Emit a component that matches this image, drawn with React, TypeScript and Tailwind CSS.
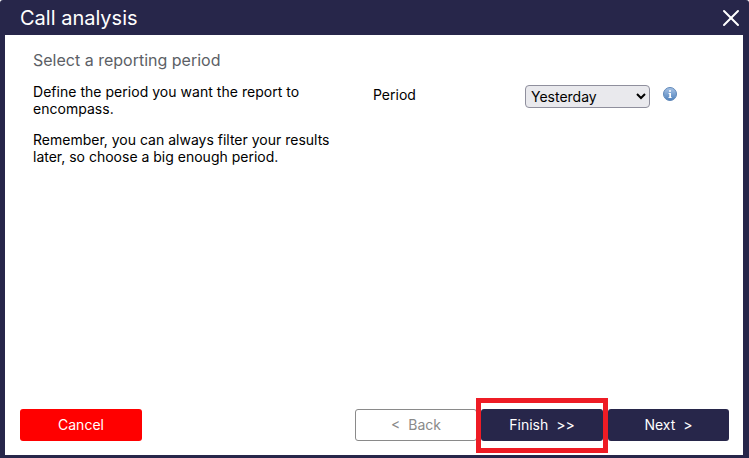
import { X } from "lucide-react";

const App = () => {
  return (
    <div className="flex h-[458px] w-[749px] flex-col overflow-hidden rounded-t-[3px] bg-[#27264a] font-['Inter',sans-serif] text-sm">
      <div className="flex h-[35px] shrink-0 items-center justify-between pl-5 pr-[4px]">
        <span className="text-xl leading-none text-white">Call analysis</span>
        <X size={28} strokeWidth={1.7} className="text-white" />
      </div>
      <div className="relative mb-[3px] ml-[5px] mr-[6px] flex grow flex-col bg-white pl-[15px] pr-[14px]">
        <div className="flex grow">
          <div className="w-[340px] shrink-0 pl-[13px] pt-[15px]">
            <div className="text-base leading-5 text-[#5c5f66]">Select a reporting period</div>
            <p className="mt-[13px] w-[300px] tracking-[0.03px] leading-[17px] text-black">
              Define the period you want the report to encompass.
            </p>
            <p className="mt-[14px] w-[300px] leading-[17px] text-black">
              Remember, you can always filter your results later, so choose a big enough period.
            </p>
          </div>
          <div className="flex grow items-start pt-[49px]">
            <span className="w-[165px] pl-[13px] leading-[21px] text-black">Period</span>
            <select className="mt-px h-[23px] w-[125px] rounded-[4px] border border-[#8f8f9d] bg-[#e9e9ed] pl-px text-sm text-black">
              <option>Yesterday</option>
            </select>
            <svg width="14" height="14" viewBox="0 0 14 14" className="ml-[13px] mt-[3px]">
              <defs>
                <linearGradient id="info" x1="0" y1="0" x2="0" y2="1">
                  <stop offset="0" stopColor="#a9c4e6" />
                  <stop offset="1" stopColor="#4f82bd" />
                </linearGradient>
              </defs>
              <circle cx="7" cy="7" r="6.5" fill="url(#info)" stroke="#5f87b8" strokeWidth="1" />
              <circle cx="7" cy="3.9" r="1" fill="#ffffff" />
              <path d="M5.6 6h2.4v4.2h.8v.9H5.4v-.9h.9V6.9h-.7z" fill="#ffffff" />
            </svg>
          </div>
        </div>
        <div className="flex h-[46px] shrink-0 items-start">
          <button className="h-8 w-[122px] rounded-[3px] bg-[#ff0000] text-white">Cancel</button>
          <div className="ml-auto flex">
            <button className="h-8 w-[122px] rounded-[3px] border border-[#8a8a8a] bg-white text-[#8a8a8a]">
              {"<"}&nbsp; Back
            </button>
            <button className="ml-1 h-8 w-[122px] rounded-[3px] bg-[#27264a] text-white">
              Finish&nbsp; {">>"}
            </button>
            <button className="ml-[5px] h-8 w-[121px] rounded-[3px] bg-[#27264a] text-white">
              Next&nbsp; {">"}
            </button>
          </div>
        </div>
        <div className="pointer-events-none absolute left-[471px] top-[363px] h-[55px] w-[132px] border-[5px] border-[#ee1c25]" />
      </div>
    </div>
  );
};

export default App;
